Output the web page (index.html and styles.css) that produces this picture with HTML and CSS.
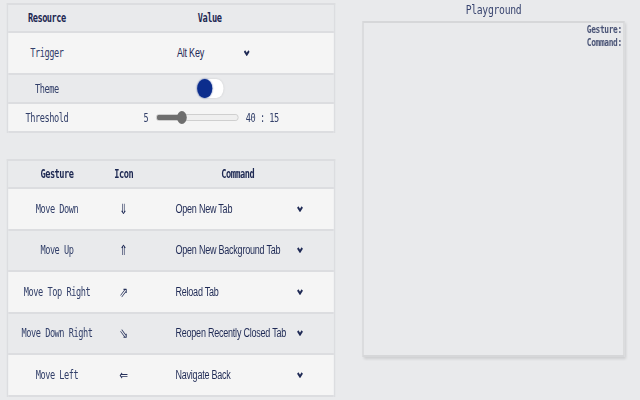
FILE: index.html
```html
<!DOCTYPE html>
<html lang="en">
  <head>
    <meta charset="UTF-8" />
    <meta name="viewport" content="width=device-width, initial-scale=1.0" />
    <title>Mouse Gestures</title>
    <link rel="stylesheet" href="styles.css">
  </head>
  <body>
    <div class="page">
      <div class="settings">
        <div class="table options">
          <div class="row head">
            <div>Resource</div>
            <div>Value</div>
          </div>
          <div class="row trigger">
            <div>Trigger</div>
            <div>
              <div class="select short">
                <span>Alt Key</span>
                <svg width="8" height="6" viewBox="0 0 8 6"><polyline points="1,1 4,4.5 7,1" /></svg>
              </div>
            </div>
          </div>
          <div class="row alt">
            <div>Theme</div>
            <div><span class="toggle"><span class="knob"></span></span></div>
          </div>
          <div class="row">
            <div>Threshold</div>
            <div class="threshold">
              <span>5</span>
              <input class="range" type="range" min="1" max="15" value="5" />
              <span>40 : 15</span>
            </div>
          </div>
        </div>

        <div class="table gestures">
          <div class="row head">
            <div>Gesture</div>
            <div>Icon</div>
            <div>Command</div>
          </div>
          <div class="row">
            <div>Move Down</div>
            <div class="icon">&#8659;</div>
            <div>
              <div class="select">
                <span>Open New Tab</span>
                <svg width="8" height="6" viewBox="0 0 8 6"><polyline points="1,1 4,4.5 7,1" /></svg>
              </div>
            </div>
          </div>
          <div class="row alt">
            <div>Move Up</div>
            <div class="icon">&#8657;</div>
            <div>
              <div class="select">
                <span>Open New Background Tab</span>
                <svg width="8" height="6" viewBox="0 0 8 6"><polyline points="1,1 4,4.5 7,1" /></svg>
              </div>
            </div>
          </div>
          <div class="row">
            <div>Move Top Right</div>
            <div class="icon">&#8663;</div>
            <div>
              <div class="select">
                <span>Reload Tab</span>
                <svg width="8" height="6" viewBox="0 0 8 6"><polyline points="1,1 4,4.5 7,1" /></svg>
              </div>
            </div>
          </div>
          <div class="row alt">
            <div>Move Down Right</div>
            <div class="icon">&#8664;</div>
            <div>
              <div class="select">
                <span>Reopen Recently Closed Tab</span>
                <svg width="8" height="6" viewBox="0 0 8 6"><polyline points="1,1 4,4.5 7,1" /></svg>
              </div>
            </div>
          </div>
          <div class="row">
            <div>Move Left</div>
            <div class="icon">&#8656;</div>
            <div>
              <div class="select">
                <span>Navigate Back</span>
                <svg width="8" height="6" viewBox="0 0 8 6"><polyline points="1,1 4,4.5 7,1" /></svg>
              </div>
            </div>
          </div>
        </div>
      </div>

      <div class="playground">
        <div class="playground__title">Playground</div>
        <div class="playground__area">
          <div>Gesture:</div>
          <div>Command:</div>
        </div>
      </div>
    </div>
  </body>
</html>
```

FILE: styles.css
```css
* {
  margin: 0;
  padding: 0;
  box-sizing: border-box;
}

html,
body {
  background: #e9eaec;
  overflow: hidden;
}

body {
  width: 640px;
  height: 400px;
}

/* the popup is laid out wide and squeezed into 640px */
.page {
  width: 852px;
  padding: 1px 9px 0;
  display: flex;
  align-items: flex-start;
  transform: scaleX(0.75);
  transform-origin: 0 0;
  font-family: "DejaVu Sans Mono", "Liberation Mono", monospace;
  font-size: 11.5px;
  letter-spacing: -0.6px;
  color: #33406a;
}

.settings {
  width: 438px;
  padding-top: 2px;
}

.table {
  border: 2px solid #dcdde0;
  border-bottom: 0;
}
.gestures {
  margin-top: 26px;
}

.row {
  display: grid;
  align-items: center;
  text-align: center;
  height: 29px;
  background: #f5f5f5;
  border-bottom: 2px solid #dcdde0;
}
.options .row {
  grid-template-columns: 103px 1fr;
}
.gestures .row {
  grid-template-columns: 130px 48px 1fr;
  height: 41.5px;
}
.row.alt,
.row.head {
  background: #e9eaec;
}
.options .row.head,
.gestures .row.head {
  height: 28px;
  font-weight: bold;
  color: #1d2852;
}
.options .row.trigger {
  height: 42px;
}

.select {
  display: flex;
  align-items: center;
  justify-content: space-between;
  width: 182px;
  margin: 0 auto;
  padding: 0 4px 0 8px;
  font-family: "Liberation Sans", Arial, sans-serif;
  font-size: 12px;
  letter-spacing: -0.3px;
  color: #1f2a55;
  text-align: left;
}
.select.short {
  width: 109px;
  margin: 0 auto 0 114px;
}
.select svg {
  fill: none;
  stroke: #1f2a55;
  stroke-width: 2.4;
}

.icon {
  font-family: "DejaVu Sans", sans-serif;
  font-size: 14px;
  letter-spacing: 0;
  color: #25305a;
}

.toggle {
  display: inline-block;
  vertical-align: middle;
  width: 35px;
  height: 19px;
  margin-left: 2px;
  border-radius: 10px;
  background: #ffffff;
  box-shadow: 0 0 3px rgba(0, 0, 0, 0.12);
}
.knob {
  display: block;
  width: 20px;
  height: 19px;
  border-radius: 50%;
  background: #0c2d8d;
  box-shadow: 0 0 2px #0c2d8d;
}

.threshold {
  display: flex;
  align-items: center;
  justify-content: center;
  gap: 10px;
  padding-left: 4px;
}
.range {
  -webkit-appearance: none;
  appearance: none;
  width: 110px;
  height: 7px;
  border-radius: 4px;
  border: 1px solid #c9c9c9;
  background: linear-gradient(to right, #6e6e6e 29%, #efefef 29%);
  outline: none;
}
.range::-webkit-slider-thumb {
  -webkit-appearance: none;
  width: 13px;
  height: 13px;
  border-radius: 50%;
  background: #6e6e6e;
}

.playground {
  width: 350px;
  margin-left: 36px;
}
.playground__title {
  text-align: center;
  font-size: 13px;
  letter-spacing: -0.4px;
  line-height: 18px;
  margin-bottom: 2px;
  color: #3a4670;
}
.playground__area {
  height: 336px;
  border: 2px solid #d6d7d9;
  box-shadow: 2px 2px 3px rgba(0, 0, 0, 0.12);
  padding: 0 2px;
  text-align: right;
  font-size: 10.5px;
  letter-spacing: -0.5px;
  font-weight: bold;
  line-height: 13px;
  color: #4b5577;
}
```
